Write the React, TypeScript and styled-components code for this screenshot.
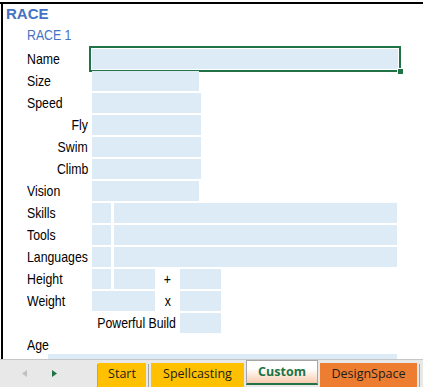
import React from "react";
import styled, { createGlobalStyle, css } from "styled-components";

const GlobalStyle = createGlobalStyle`
  html, body { margin: 0; padding: 0; background: #ffffff; }
  body {
    width: 423px;
    height: 387px;
    overflow: hidden;
    font-family: "Liberation Sans", Arial, sans-serif;
  }
`;

const Page = styled.div`
  width: 423px;
  height: 387px;
  display: flex;
  flex-direction: column;
  overflow: hidden;
`;

const Sheet = styled.div`
  height: 359px;
  padding-top: 2px;
  box-sizing: border-box;
  display: flex;
  flex-direction: column;
`;

const Frame = styled.div`
  flex: 1;
  min-height: 0;
  border-top: 2px solid #000;
  display: flex;
`;

const Inner = styled.div`
  flex: 1;
  margin-left: 1px;
  border-left: 2px solid #000;
  display: flex;
  flex-direction: column;
  overflow: hidden;
`;

const Title = styled.div`
  height: 20px;
  line-height: 20px;
  padding-left: 3px;
  font-size: 15px;
  font-weight: bold;
  color: #4472c4;
`;

/* Narrow (Arial Narrow–like) text: Liberation Sans compressed horizontally */
const Narrow = styled.span<{ $origin?: "left" | "right" | "center" }>`
  display: inline-block;
  transform: scaleX(0.82);
  transform-origin: ${(p) => p.$origin ?? "left"} center;
  white-space: nowrap;
`;

const Subtitle = styled.div`
  height: 21px;
  line-height: 21px;
  margin-bottom: 4px;
  padding-left: 24px;
  font-size: 15px;
  color: #4472c4;
`;

const Rows = styled.div`
  display: flex;
  flex-direction: column;
`;

const Row = styled.div<{ $h?: number }>`
  display: flex;
  align-items: flex-start;
  height: ${(p) => p.$h ?? 22}px;
  padding-left: 24px;
  flex-shrink: 0;
`;

const Label = styled.div<{ $right?: boolean; $w?: number }>`
  width: ${(p) => p.$w ?? 65}px;
  flex-shrink: 0;
  box-sizing: border-box;
  height: 20px;
  line-height: 20px;
  font-size: 15px;
  color: #000;
  white-space: nowrap;
  ${(p) =>
    p.$right &&
    css`
      text-align: right;
      padding-right: 4px;
    `}
`;

const CellGroup = styled.div`
  display: flex;
  gap: 3px;
`;

const Cell = styled.div<{ $w: number }>`
  position: relative;
  width: ${(p) => p.$w}px;
  height: 20px;
  flex-shrink: 0;
  background: #ddebf7;
`;

const Op = styled.div`
  width: 25px;
  flex-shrink: 0;
  height: 20px;
  line-height: 20px;
  text-align: center;
  font-size: 15px;
  color: #000;
`;

const Selection = styled.div`
  position: absolute;
  top: -3px;
  left: -3px;
  right: -3px;
  bottom: -3px;
  border: 2px solid #217346;
  box-shadow: inset 0 0 0 1px #ffffff;
  pointer-events: none;
`;

const FillHandle = styled.div`
  position: absolute;
  right: -5px;
  bottom: -5px;
  width: 5px;
  height: 5px;
  background: #217346;
  border: 1px solid #ffffff;
`;

const WideFill = styled.div`
  margin-left: 45px;
  width: 349px;
  height: 20px;
  background: #ddebf7;
  flex-shrink: 0;
`;

const TabBar = styled.div`
  height: 28px;
  box-sizing: border-box;
  border-top: 1px solid #c6c6c6;
  background: #e8e8e8;
  display: flex;
  align-items: flex-start;
  font-family: "Open Sans", "Noto Sans", sans-serif;
  font-size: 12.5px;
`;

const Nav = styled.div`
  width: 97px;
  height: 27px;
  display: flex;
  align-items: flex-start;
  flex-shrink: 0;
`;

const NavArrow = styled.svg<{ $ml: number }>`
  display: block;
  margin-left: ${(p) => p.$ml}px;
  margin-top: 10px;
`;

const Sep = styled.div<{ $mx?: number }>`
  width: 1px;
  height: 23px;
  margin-top: 4px;
  margin-left: ${(p) => p.$mx ?? 0}px;
  margin-right: ${(p) => p.$mx ?? 1}px;
  background: #a6a6a6;
  flex-shrink: 0;
`;

const Tab = styled.div<{ $bg: string; $w: number; $gap?: number }>`
  width: ${(p) => p.$w}px;
  margin-top: 3px;
  margin-right: ${(p) => p.$gap ?? 2}px;
  height: 24px;
  line-height: 21px;
  text-align: center;
  background: ${(p) => p.$bg};
  color: #1e1e1e;
  white-space: nowrap;
  flex-shrink: 0;
`;

const ActiveTab = styled.div`
  width: 72px;
  height: 25px;
  box-sizing: border-box;
  margin-right: 2px;
  border: 1px solid #a6a6a6;
  border-bottom: 2px solid #217346;
  background: linear-gradient(#ffffff 35%, #f8cbad);
  line-height: 22px;
  text-align: center;
  font-weight: bold;
  color: #217346;
  flex-shrink: 0;
`;

type Field =
  | { kind: "single"; label: string; right?: boolean; w: number; selected?: boolean }
  | { kind: "pair"; label: string };

const fields: Field[] = [
  { kind: "single", label: "Name", w: 306, selected: true },
  { kind: "single", label: "Size", w: 107 },
  { kind: "single", label: "Speed", w: 109 },
  { kind: "single", label: "Fly", right: true, w: 109 },
  { kind: "single", label: "Swim", right: true, w: 109 },
  { kind: "single", label: "Climb", right: true, w: 109 },
  { kind: "single", label: "Vision", w: 107 },
  { kind: "pair", label: "Skills" },
  { kind: "pair", label: "Tools" },
  { kind: "pair", label: "Languages" },
];

export default function App() {
  return (
    <>
      <GlobalStyle />
      <Page>
        <Sheet>
          <Frame>
            <Inner>
              <Title>RACE</Title>
              <Subtitle>
                <Narrow>RACE 1</Narrow>
              </Subtitle>
              <Rows>
                {fields.map((f) =>
                  f.kind === "single" ? (
                    <Row key={f.label}>
                      <Label $right={f.right}>
                        <Narrow $origin={f.right ? "right" : "left"}>{f.label}</Narrow>
                      </Label>
                      <Cell $w={f.w}>
                        {f.selected && (
                          <Selection>
                            <FillHandle />
                          </Selection>
                        )}
                      </Cell>
                    </Row>
                  ) : (
                    <Row key={f.label}>
                      <Label>
                        <Narrow>{f.label}</Narrow>
                      </Label>
                      <CellGroup>
                        <Cell $w={19} />
                        <Cell $w={283} />
                      </CellGroup>
                    </Row>
                  )
                )}
                <Row>
                  <Label>
                    <Narrow>Height</Narrow>
                  </Label>
                  <CellGroup>
                    <Cell $w={19} />
                    <Cell $w={41} />
                  </CellGroup>
                  <Op>
                    <Narrow $origin="center">+</Narrow>
                  </Op>
                  <Cell $w={41} />
                </Row>
                <Row>
                  <Label>
                    <Narrow>Weight</Narrow>
                  </Label>
                  <Cell $w={63} />
                  <Op>
                    <Narrow $origin="center">x</Narrow>
                  </Op>
                  <Cell $w={41} />
                </Row>
                <Row>
                  <Label $right $w={153}>
                    <Narrow $origin="right">Powerful Build</Narrow>
                  </Label>
                  <Cell $w={41} />
                </Row>
                <Row $h={19}>
                  <Label>
                    <Narrow>Age</Narrow>
                  </Label>
                </Row>
                <WideFill />
              </Rows>
            </Inner>
          </Frame>
        </Sheet>
        <TabBar>
          <Nav>
            <NavArrow $ml={22} width="5" height="7" viewBox="0 0 5 7">
              <polygon points="5,0 5,7 0,3.5" fill="#c0c0c0" />
            </NavArrow>
            <NavArrow $ml={25} width="5" height="7" viewBox="0 0 5 7">
              <polygon points="0,0 0,7 5,3.5" fill="#217346" />
            </NavArrow>
          </Nav>
          <Sep $mx={0} />
          <Tab $bg="#ffc000" $w={48} $gap={0}>
            Start
          </Tab>
          <Sep $mx={2} />
          <Tab $bg="#ffc000" $w={93}>
            Spellcasting
          </Tab>
          <ActiveTab>Custom</ActiveTab>
          <Tab $bg="#ed7d31" $w={97} $gap={1}>
            DesignSpace
          </Tab>
          <Sep $mx={1} />
        </TabBar>
      </Page>
    </>
  );
}
